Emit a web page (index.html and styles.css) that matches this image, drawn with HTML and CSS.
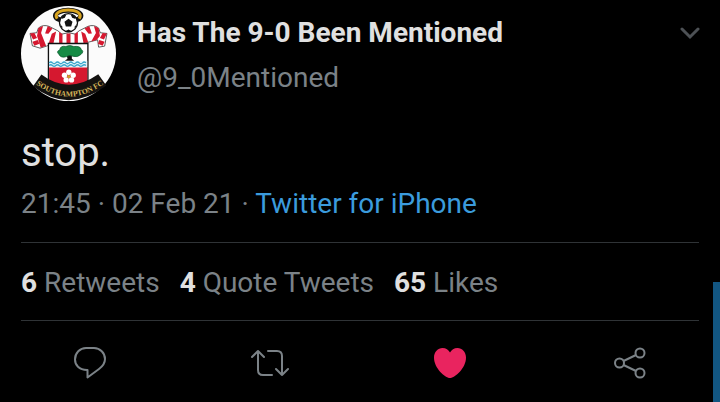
FILE: index.html
```html
<!DOCTYPE html>
<html lang="en">
<head>
    <meta charset="UTF-8">
    <meta name="viewport" content="width=device-width, initial-scale=1.0">
    <title>Has The 9-0 Been Mentioned</title>
    <link rel="stylesheet" href="styles.css">
</head>
<body>
    <article class="tweet">
        <header class="tweet-header">
            <svg class="avatar" viewBox="0 0 284 284" role="img" aria-label="Southampton FC">
                <defs>
                    <path id="motto" d="M42 233 Q147 309 250 231" />
                </defs>
                <circle cx="142" cy="142" r="142" fill="#fbfbfb" />
                <!-- Halo and ball -->
                <ellipse cx="141" cy="29" rx="38" ry="16" fill="none" stroke="#111" stroke-width="15" />
                <circle cx="142" cy="50" r="27" fill="#fff" stroke="#111" stroke-width="4" />
                <path d="M142 38 L154 47 L150 61 L134 61 L130 47 Z M124 29 L136 25 L131 35 L121 39 Z M160 29 L148 25 L153 35 L163 39 Z M116 53 L124 62 L123 69 Z M168 53 L160 62 L161 69 Z M134 75 L150 75 L142 70 Z" fill="#111" />
                <path d="M108 38 C98 22 116 12 141 12 S184 22 174 38" fill="none" stroke="#d9a521" stroke-width="9" />
                <!-- Scarf -->
                <path d="M27 82 L47 80 L52 66 Q66 54 84 61 L110 74 L122 84 L142 80 L162 84 L174 74 L200 61 Q218 54 232 66 L237 80 L257 82 L250 120 L232 123 L229 101 L210 106 L186 112 L98 112 L76 120 L57 126 L34 119 Z" fill="#fff" stroke="#111" stroke-width="2" />
                <path d="M27 82 L40 81 L48 96 L36 100 Z M34 107 L50 102 L55 113 L40 119 Z M52 66 L66 60 L60 81 L75 119 L59 125 L48 90 Z M80 60 L94 67 L82 83 L72 82 Z M92 83 L105 76 L97 112 L83 111 Z M114 78 L124 84 L124 111 L114 111 Z M136 82 L148 82 L148 111 L136 111 Z M160 84 L170 78 L170 111 L160 111 Z M180 76 L192 83 L201 108 L187 111 Z M190 67 L204 60 L212 82 L202 83 Z M218 60 L232 66 L236 90 L226 102 L210 106 L224 81 Z M244 81 L257 82 L248 100 L236 96 Z M234 102 L250 107 L244 119 L230 113 Z" fill="#d5182f" />
                <!-- Shield -->
                <path d="M82 112 L200 112 L200 222 Q142 270 82 222 Z" fill="#fff" stroke="#111" stroke-width="4" />
                <rect x="84" y="164" width="114" height="19" fill="#e4f5fb" />
                <path d="M84 170 q5 -5 10 0 t10 0 t10 0 t10 0 t10 0 t10 0 t10 0 t10 0 t10 0 t10 0 t10 0 M84 178 q5 -5 10 0 t10 0 t10 0 t10 0 t10 0 t10 0 t10 0 t10 0 t10 0 t10 0 t10 0" fill="none" stroke="#3ba6cb" stroke-width="4" />
                <path d="M84 184 H198 V224 Q142 265 84 224 Z" fill="#d5182f" />
                <path d="M136 144 H152 L152 158 L159 164 H131 L139 158 Z" fill="#111" />
                <path d="M113 144 Q104 136 116 131 Q117 118 134 121 Q145 115 158 121 Q178 119 180 130 Q190 136 179 145 Q169 155 154 150 Q145 146 137 151 Q119 157 113 144 Z" fill="#168b45" stroke="#0b542a" stroke-width="2" />
                <g fill="#fff">
                    <circle cx="143" cy="198" r="8" />
                    <circle cx="156" cy="207" r="8" />
                    <circle cx="151" cy="221" r="8" />
                    <circle cx="135" cy="221" r="8" />
                    <circle cx="130" cy="207" r="8" />
                </g>
                <circle cx="143" cy="211" r="5" fill="#c9a22a" />
                <!-- Name banner -->
                <path d="M61 205 Q142 266 231 204 L255 238 Q142 324 36 240 Z" fill="#141210" />
                <text class="motto" text-anchor="middle"><textPath href="#motto" startOffset="50%">SOUTHAMPTON FC</textPath></text>
            </svg>
            <div class="author">
                <h1 class="name">Has The 9-0 Been Mentioned</h1>
                <span class="handle">@9_0Mentioned</span>
            </div>
            <button class="icon-button menu" type="button" aria-label="More">
                <svg width="20" height="14" viewBox="0 0 20 14">
                    <path d="M2 3 L10 11 L18 3" fill="none" stroke="#4d5155" stroke-width="3" stroke-linecap="round" />
                </svg>
            </button>
        </header>

        <p class="text">stop.</p>
        <p class="meta">21:45 · 02 Feb 21 · <a href="#">Twitter for iPhone</a></p>

        <div class="stats">
            <span><b>6</b> Retweets</span>
            <span><b>4</b> Quote Tweets</span>
            <span><b>65</b> Likes</span>
        </div>

        <div class="actions">
            <button class="icon-button" type="button" aria-label="Reply">
                <svg width="40" height="34" viewBox="0 0 40 34">
                    <path d="M17 24 C9 24 5 19 5 13.500 C5 7 10 2 16 2 H24 C30 2 35 7 35 13 C35 17 33 20 29 23 L17.500 31.500 V24 Z" fill="none" stroke="#7b8287" stroke-width="2" stroke-linejoin="round" />
                </svg>
            </button>
            <button class="icon-button" type="button" aria-label="Retweet">
                <svg width="40" height="34" viewBox="0 0 40 34">
                    <path d="M2 11 L8 5 L14 11 M8 5 V24 Q8 29 13 29 H22 M18 5 H27 Q32 5 32 10 V29 M26 23 L32 29 L38 23" fill="none" stroke="#7b8287" stroke-width="2" stroke-linecap="round" stroke-linejoin="round" />
                </svg>
            </button>
            <button class="icon-button" type="button" aria-label="Like">
                <svg width="40" height="34" viewBox="0 0 40 34">
                    <path d="M20 32 C15 32 4 22 4 11.500 C4 6 8 2 12.500 2 C16 2 18.500 4 20 6.500 C21.500 4 24 2 27.500 2 C32 2 36 6 36 11.500 C36 22 25 32 20 32 Z" fill="#e9245f" />
                </svg>
            </button>
            <button class="icon-button" type="button" aria-label="Share">
                <svg width="40" height="34" viewBox="0 0 40 34">
                    <g fill="none" stroke="#7b8287" stroke-width="2">
                        <circle cx="9.500" cy="17" r="4.500" />
                        <circle cx="30" cy="7" r="4.500" />
                        <circle cx="30" cy="27" r="4.500" />
                        <path d="M13.500 15 L26 9 M13.500 19 L26 25" />
                    </g>
                </svg>
            </button>
        </div>
    </article>
    <div class="side-strip"></div>
</body>
</html>
```
FILE: styles.css
```css
* {
    box-sizing: border-box;
}

body {
    margin: 0;
    min-height: 100vh;
    background-color: #000;
    color: #7b8287;
    font-family: Roboto, sans-serif;
    font-size: 28px;
    line-height: 34px;
    overflow: hidden;
}

.tweet {
    padding-top: 6px;
}

/* Header */
.tweet-header {
    display: flex;
    align-items: flex-start;
    gap: 21px;
    padding: 0 20px 0 21px;
}

.avatar {
    width: 95px;
    height: 95px;
    flex: none;
}

.motto {
    font-family: "Liberation Serif", serif;
    font-size: 23px;
    font-weight: bold;
    fill: #d8b75a;
}

.author {
    flex: 1;
    display: flex;
    flex-direction: column;
    gap: 11px;
    padding-top: 10px;
}

.name {
    margin: 0;
    color: #e0e0e0;
    font-size: 28px;
    font-weight: bold;
}

.icon-button {
    display: flex;
    align-items: center;
    justify-content: center;
    padding: 0;
    border: none;
    background: none;
    cursor: pointer;
}

.menu {
    margin-top: 20px;
}

/* Tweet body */
.text {
    margin: 28px 21px 0;
    color: #e0e0e0;
    font-size: 40px;
    line-height: 48px;
}

.meta {
    margin: 10px 21px 0;
    padding-bottom: 21px;
    border-bottom: 1px solid #2f3336;
}

.meta a {
    color: #3b9bdc;
    text-decoration: none;
}

.stats {
    display: flex;
    gap: 20px;
    margin: 0 21px;
    padding: 23px 0 20px;
    border-bottom: 1px solid #2f3336;
}

.stats b {
    color: #e0e0e0;
}

/* Buttons under the tweet */
.actions {
    display: flex;
    justify-content: space-around;
    padding-top: 25px;
}

.side-strip {
    position: absolute;
    top: 282px;
    right: 0;
    bottom: 0;
    width: 7px;
    background-color: #125682;
}
```
